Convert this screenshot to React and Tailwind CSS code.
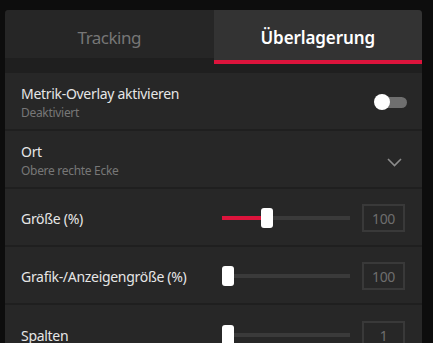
import React from "react";

function Toggle() {
  return (
    <div className="relative w-[33px] h-[16px] flex items-center">
      <div className="absolute left-[6px] right-0 h-[11px] rounded-full bg-[#6f6f6f]" />
      <div className="absolute left-0 w-[16px] h-[16px] rounded-full bg-white" />
    </div>
  );
}

function Slider({ pos }) {
  return (
    <div className="relative w-[128px] h-[20px] flex items-center">
      <div className="w-full h-[4px] bg-[#3a3a3a]" />
      {pos > 0 && (
        <div className="absolute left-0 h-[4px] bg-[#dc143c]" style={{ width: pos + 6 }} />
      )}
      <div
        className="absolute top-0 w-[12px] h-[20px] rounded-[3px] bg-white"
        style={{ left: pos }}
      />
    </div>
  );
}

function NumBox({ value }) {
  return (
    <div className="w-[43px] h-[28px] border-2 border-[#393939] flex items-center justify-center text-[14px] tracking-[-0.4px] text-[#6e6e6e]">
      {value}
    </div>
  );
}

function SliderRow({ label, pos, value, last }) {
  return (
    <div className={`h-[58px] flex items-center pl-[16px] pr-[17px] pt-[2px] ${last ? "" : "border-b-2 border-[#1f1f1f]"}`}>
      <div className="w-[201px] text-[14px] tracking-[-0.3px] text-[#e6e6e6]">{label}</div>
      <Slider pos={pos} />
      <div className="ml-[12px]">
        <NumBox value={value} />
      </div>
    </div>
  );
}

export default function App() {
  return (
    <div
      className="w-[433px] h-[343px] bg-[#0d0d0d] pt-[10px] pl-[5px] overflow-hidden"
      style={{ fontFamily: '"Noto Sans", "Open Sans", sans-serif' }}
    >
      <div className="w-[417px] h-[400px] rounded-t-[4px] overflow-hidden bg-[#272727]">
        <div className="flex items-start bg-[#1f1f1f]">
          <div className="flex-1 h-[48px] bg-[#262626] flex items-center justify-center pt-[8px] text-[17px] tracking-[-0.5px] text-[#767676]">
            Tracking
          </div>
          <div className="flex-1 h-[54px] bg-[#333333] border-b-4 border-[#dc143c] flex items-center justify-center pt-[6px] text-[17px] tracking-[-0.1px] font-semibold text-white">
            Überlagerung
          </div>
        </div>
        <div className="h-[9px] bg-[#1f1f1f]" />

        <div className="h-[58px] flex items-center justify-between pl-[16px] pr-[15px] pt-[2px] border-b-2 border-[#1f1f1f]">
          <div className="flex flex-col">
            <div className="text-[14px] leading-[20px] tracking-[-0.3px] text-[#e6e6e6]">Metrik-Overlay aktivieren</div>
            <div className="text-[12px] leading-[16px] mt-[1px] tracking-[-0.3px] text-[#777777]">Deaktiviert</div>
          </div>
          <Toggle />
        </div>

        <div className="h-[58px] flex items-center justify-between pl-[16px] pr-[20px] pt-[2px] border-b-2 border-[#1f1f1f]">
          <div className="flex flex-col">
            <div className="text-[14px] leading-[20px] tracking-[-0.3px] text-[#e6e6e6]">Ort</div>
            <div className="text-[12px] leading-[16px] mt-[1px] tracking-[-0.3px] text-[#777777]">Obere rechte Ecke</div>
          </div>
          <svg width="15" height="9" viewBox="0 0 15 9" fill="none" className="mt-[4px]">
            <polyline points="1,1 7.5,7.5 14,1" stroke="#8c8c8c" strokeWidth="1.6" />
          </svg>
        </div>

        <SliderRow label="Größe (%)" pos={39} value="100" />
        <SliderRow label="Grafik-/Anzeigengröße (%)" pos={0} value="100" />
        <SliderRow label="Spalten" pos={0} value="1" last />
      </div>
    </div>
  );
}
